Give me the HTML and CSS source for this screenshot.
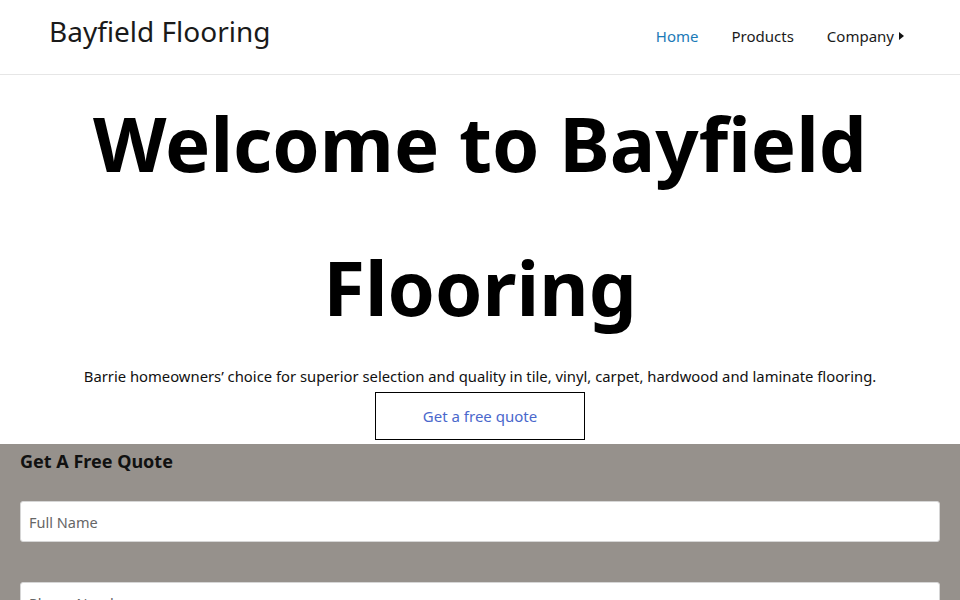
FILE: index.html
```html
<!DOCTYPE html>
<html lang="en">
<head>
<meta charset="utf-8">
<title>Bayfield Flooring</title>
<link rel="stylesheet" href="styles.css">
</head>
<body>
<header class="site-header">
  <div class="brand">Bayfield Flooring</div>
  <nav class="main-nav">
    <a class="nav-link active" href="#">Home</a>
    <a class="nav-link" href="#">Products</a>
    <a class="nav-link has-sub" href="#">Company<svg class="caret" width="5" height="8" viewBox="0 0 5 8"><path d="M0 0 L5 4 L0 8 Z" fill="#111"/></svg></a>
  </nav>
</header>
<section class="hero">
  <h1 class="hero-title">Welcome to Bayfield Flooring</h1>
  <p class="hero-text">Barrie homeowners’ choice for superior selection and quality in tile, vinyl, carpet, hardwood and laminate flooring.</p>
  <a class="quote-btn" href="#">Get a free quote</a>
</section>
<section class="quote-section">
  <h2 class="quote-title">Get A Free Quote</h2>
  <form class="quote-form">
    <input class="field" type="text" placeholder="Full Name">
    <input class="field" type="text" placeholder="Phone Number">
  </form>
</section>
</body>
</html>
```
FILE: styles.css
```css
* { box-sizing: border-box; }
html, body { margin: 0; padding: 0; }
body {
  font-family: "Noto Sans", "Open Sans", sans-serif;
  color: #111;
  background: #fff;
}
.site-header {
  height: 75px;
  display: flex;
  align-items: center;
  justify-content: space-between;
  padding: 0 56px 0 49px;
  border-bottom: 1px solid #e6e6e6;
}
.brand {
  font-size: 28px;
  color: #1a1a1a;
  margin-top: -12px;
}
.main-nav {
  display: flex;
  gap: 33px;
  align-items: center;
  margin-top: -2px;
}
.nav-link {
  font-size: 15px;
  color: #1a1a1a;
  text-decoration: none;
  display: inline-flex;
  align-items: center;
}
.nav-link.active { color: #1b7ab7; }
.caret { margin-left: 5px; }
.hero {
  text-align: center;
  padding: 0 60px;
  height: 369px;
  overflow: hidden;
}
.hero-title {
  margin: -4px 0 0;
  font-size: 76px;
  line-height: 144px;
  font-weight: 700;
  color: #000;
}
.hero-text {
  margin: 6px 0 5px;
  font-size: 14.8px;
  line-height: 22px;
}
.quote-btn {
  display: inline-flex;
  align-items: center;
  justify-content: center;
  width: 210px;
  height: 48px;
  border: 1px solid #000;
  color: #4a68cc;
  font-size: 15px;
  text-decoration: none;
}
.quote-section {
  background: #96918c;
  padding: 6px 20px 20px;
  min-height: 160px;
}
.quote-title {
  margin: 0 0 29px;
  font-size: 18px;
  line-height: 22px;
  font-weight: 700;
  color: #111;
}
.quote-form {
  display: flex;
  flex-direction: column;
  gap: 40px;
}
.field {
  width: 100%;
  height: 41px;
  border: 1px solid #d6d6d6;
  border-radius: 3px;
  padding: 0 8px;
  font-family: inherit;
  font-size: 14.5px;
  background: #fff;
}
.field::placeholder { color: #666; }
```
